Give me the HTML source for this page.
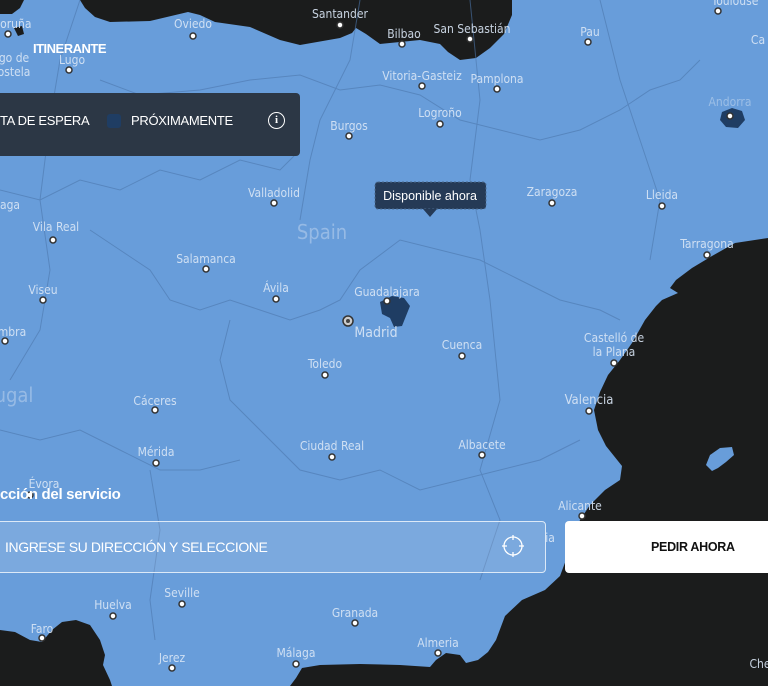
<!DOCTYPE html>
<html><head><meta charset="utf-8"><style>
html,body{margin:0;padding:0;width:768px;height:686px;overflow:hidden;background:#689dda;font-family:"Liberation Sans","DejaVu Sans",sans-serif}
svg{position:absolute;left:0;top:0}
.c{fill:#dbe7f6;font-size:12px;text-anchor:middle;font-family:"DejaVu Sans Condensed","Liberation Sans",sans-serif;opacity:.9}
.d{fill:#fff;stroke:#333;stroke-width:1.5}
.panel{position:absolute;left:-10px;top:93px;width:310px;height:63px;background:#2c3745;border-radius:4px}
.ov{position:absolute;color:#fff}
</style></head><body>
<svg width="768" height="686" viewBox="0 0 768 686">
<g fill="#1b1c1c">
<path d="M0 0H24L20 8L12 14L0 14Z"/>
<path d="M14 28L22 26L24 34L18 36Z"/>
<path d="M80 0L85 8L95 17L110 22L150 21L188 12L200 15L215 22L250 27L280 40L300 45L340 38L352 33L356 28L366 34L380 44L400 42L420 40L440 44L448 52L460 60L476 58L490 48L504 34L512 15L512 0Z"/>
<path d="M768 238L735 243L712 256L692 268L676 280L670 288L678 293L662 300L656 306L645 320L632 343L620 360L608 375L600 392L594 410L598 430L606 446L622 466L620 480L605 490L590 505L580 520L572 540L566 560L560 576L545 590L522 600L505 616L496 640L488 652L478 660L466 663L460 655L446 653L436 660L430 667L400 665L360 664L320 665L302 668L296 678L290 686H768Z"/>
<path d="M0 630L15 632L30 640L42 642L52 630L62 622L76 620L90 625L100 640L105 655L103 665L110 680L112 686H0Z"/>
</g>
<path d="M706 465L710 455L720 448L732 447L734 455L726 462L718 468L712 471Z" fill="#689dda"/>
<g fill="#1f3d63">
<path d="M380 302L392 296L404 298L410 306L406 316L402 326L394 327L390 318L382 314Z"/>
<path d="M722 112L732 108L742 111L745 120L738 128L726 127L720 120Z"/>
</g>
<g fill="none" stroke="#4c77ad" stroke-width="1" opacity=".6">
<path d="M100 80L140 95L200 90L250 80L300 75L340 90L380 85L420 95L460 120L500 130L540 140L580 130L620 110L650 90L680 80L700 60"/>
<path d="M0 190L40 200L80 180L120 190L160 170L200 180L240 160L280 170L300 150"/>
<path d="M90 230L120 250L150 270L170 300L200 310L230 300L260 310L290 320L320 310L340 300L360 270L400 240L440 250L480 260L520 280L560 300L600 310L620 320"/>
<path d="M230 320L220 360L230 400L260 430L300 470L340 480L380 470L420 490L460 480L500 470L540 460L580 440"/>
<path d="M0 430L40 440L80 430L120 450L160 470L200 470L240 460"/>
<path d="M150 470L160 530L150 600L155 640"/>
<path d="M470 0L480 100L470 180L480 230L490 300L500 400L480 470L500 520L480 580"/>
<path d="M600 0L620 80L640 140L660 200L650 260"/>
<path d="M80 0L60 60L50 120L40 200L50 270L40 330L10 380"/>
<path d="M360 0L350 60L320 120L310 160L300 220"/>
</g>
<g class="c">
<text x="12" y="28">Coruña</text>
<text x="193" y="28">Oviedo</text>
<text x="340" y="18">Santander</text>
<text x="404" y="38">Bilbao</text>
<text x="472" y="33">San Sebastián</text>
<text x="590" y="36">Pau</text>
<text x="735" y="5">Toulouse</text>
<text x="758" y="44">Ca</text>
<text x="72" y="64">Lugo</text>
<text x="14" y="62">go de</text>
<text x="14" y="76">ostela</text>
<text x="422" y="80">Vitoria-Gasteiz</text>
<text x="497" y="83">Pamplona</text>
<text x="349" y="130">Burgos</text>
<text x="440" y="117">Logroño</text>
<text x="730" y="106" opacity=".5">Andorra</text>
<text x="274" y="197">Valladolid</text>
<text x="552" y="196">Zaragoza</text>
<text x="662" y="199">Lleida</text>
<text x="10" y="209">aga</text>
<text x="56" y="231">Vila Real</text>
<text x="707" y="248">Tarragona</text>
<text x="206" y="263">Salamanca</text>
<text x="43" y="294">Viseu</text>
<text x="276" y="292">Ávila</text>
<text x="387" y="296">Guadalajara</text>
<text x="376" y="337" style="font-size:14px">Madrid</text>
<text x="12" y="336">mbra</text>
<text x="462" y="349">Cuenca</text>
<text x="614" y="342">Castelló de</text>
<text x="614" y="356">la Plana</text>
<text x="325" y="368">Toledo</text>
<text x="589" y="404" style="font-size:13px">Valencia</text>
<text x="155" y="405">Cáceres</text>
<text x="156" y="456">Mérida</text>
<text x="332" y="450">Ciudad Real</text>
<text x="482" y="449">Albacete</text>
<text x="44" y="488">Évora</text>
<text x="580" y="510">Alicante</text>
<text x="550" y="542">ia</text>
<text x="182" y="597">Seville</text>
<text x="113" y="609">Huelva</text>
<text x="355" y="617">Granada</text>
<text x="42" y="633">Faro</text>
<text x="438" y="647">Almeria</text>
<text x="172" y="662">Jerez</text>
<text x="296" y="657">Málaga</text>
<text x="760" y="668">Che</text>
<text x="322" y="239" style="font-size:20px;opacity:.45">Spain</text>
<text x="14" y="402" style="font-size:20px;opacity:.45">ugal</text>
</g>
<g class="d">
<circle cx="8" cy="34" r="3"/><circle cx="193" cy="36" r="3"/><circle cx="340" cy="25" r="3"/><circle cx="402" cy="44" r="3"/><circle cx="470" cy="39" r="3"/><circle cx="588" cy="42" r="3"/><circle cx="718" cy="11" r="3"/><circle cx="69" cy="70" r="3"/><circle cx="422" cy="86" r="3"/><circle cx="497" cy="89" r="3"/><circle cx="349" cy="136" r="3"/><circle cx="440" cy="124" r="3"/><circle cx="730" cy="116" r="3"/><circle cx="274" cy="203" r="3"/><circle cx="552" cy="203" r="3"/><circle cx="662" cy="206" r="3"/><circle cx="53" cy="240" r="3"/><circle cx="707" cy="255" r="3"/><circle cx="206" cy="269" r="3"/><circle cx="43" cy="300" r="3"/><circle cx="276" cy="299" r="3"/><circle cx="387" cy="301" r="3"/><circle cx="5" cy="341" r="3"/><circle cx="462" cy="356" r="3"/><circle cx="614" cy="363" r="3"/><circle cx="325" cy="375" r="3"/><circle cx="589" cy="411" r="3"/><circle cx="155" cy="410" r="3"/><circle cx="156" cy="463" r="3"/><circle cx="332" cy="457" r="3"/><circle cx="482" cy="455" r="3"/><circle cx="30" cy="495" r="3"/><circle cx="582" cy="516" r="3"/><circle cx="182" cy="604" r="3"/><circle cx="113" cy="616" r="3"/><circle cx="355" cy="623" r="3"/><circle cx="42" cy="638" r="3"/><circle cx="438" cy="653" r="3"/><circle cx="172" cy="668" r="3"/><circle cx="296" cy="664" r="3"/>
</g>
<circle cx="348" cy="321" r="5" fill="#ccc" stroke="#333" stroke-width="1.5"/><circle cx="348" cy="321" r="2" fill="#444"/>
<rect x="375" y="182" width="111" height="27" rx="3" fill="#253a56" stroke="#4c6a8e" stroke-dasharray="2 2"/>
<path d="M423 209L430 217L437 209Z" fill="#253a56"/>
<text x="430" y="200" fill="#fff" font-size="12.5" text-anchor="middle" font-family="Liberation Sans,sans-serif">Disponible ahora</text>
</svg>
<div class="panel"></div>
<div class="ov" style="left:0;top:113px;font-size:13px;letter-spacing:-.3px">TA DE ESPERA</div>
<div class="ov" style="left:107px;top:114px;width:14px;height:14px;background:#1f3d63;border-radius:3px"></div>
<div class="ov" style="left:131px;top:113px;font-size:13px;letter-spacing:-.3px">PRÓXIMAMENTE</div>
<div class="ov" style="left:268px;top:112px;width:15px;height:15px;border:1.5px solid #fff;border-radius:50%;font-size:11px;font-weight:bold;text-align:center;line-height:15px;font-family:'Liberation Serif',serif">i</div>
<div class="ov" style="left:33px;top:41px;font-size:13px;font-weight:bold;letter-spacing:-.5px">ITINERANTE</div>
<div class="ov" style="left:0;top:486px;font-size:15px;font-weight:bold;letter-spacing:-.3px">cción del servicio</div>
<div class="ov" style="left:-10px;top:521px;width:554px;height:50px;border:1px solid #dce9f7;border-radius:4px;background:rgba(255,255,255,.13)"></div>
<div class="ov" style="left:5px;top:539px;font-size:14px;letter-spacing:-.4px">INGRESE SU DIRECCIÓN Y SELECCIONE</div>
<svg width="768" height="686" style="pointer-events:none"><g stroke="#fff" stroke-width="1.3" fill="none"><circle cx="513" cy="546" r="9"/><path d="M513 535v5M513 552v5M502 546h5M519 546h5"/></g></svg>
<div class="ov" style="left:565px;top:521px;width:210px;height:52px;background:#fff;border-radius:4px;color:#111;font-size:12.5px;font-weight:bold;line-height:52px;text-indent:86px;letter-spacing:-.3px">PEDIR AHORA</div>
</body></html>
